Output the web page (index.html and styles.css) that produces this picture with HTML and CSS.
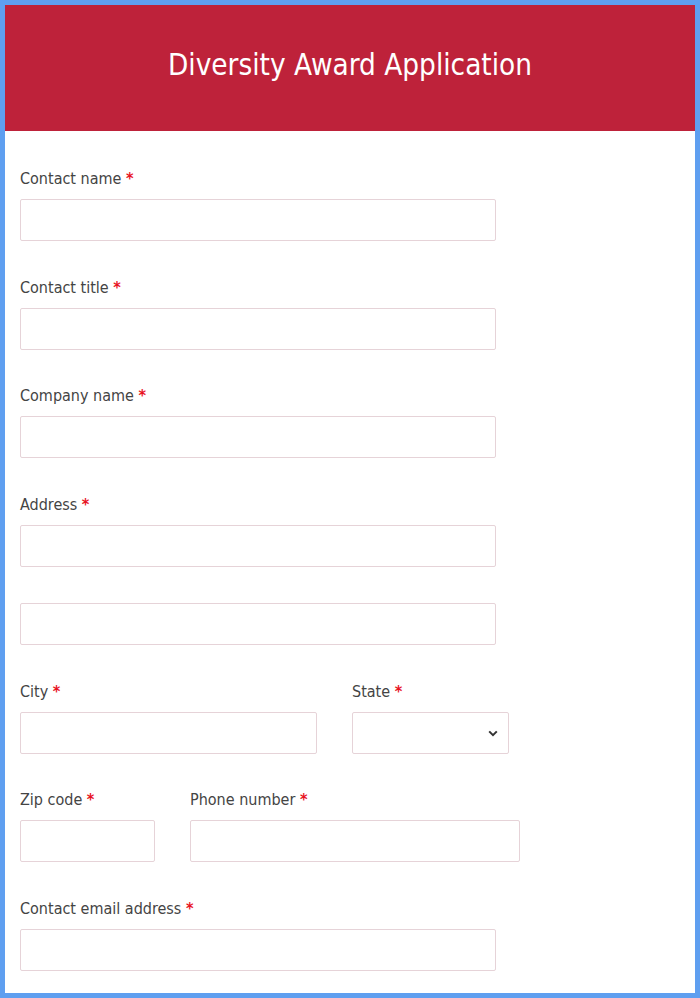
FILE: index.html
```html
<!DOCTYPE html>
<html lang="en">
<head>
<meta charset="utf-8">
<title>Diversity Award Application</title>
<link rel="stylesheet" href="styles.css">
</head>
<body>
<div class="frame">
  <header class="banner">
    <h1 class="title">Diversity Award Application</h1>
  </header>
  <form class="form">
    <div class="field">
      <label class="label">Contact name <span class="req">*</span></label>
      <input class="input w-full" type="text">
    </div>
    <div class="field">
      <label class="label">Contact title <span class="req">*</span></label>
      <input class="input w-full" type="text">
    </div>
    <div class="field">
      <label class="label">Company name <span class="req">*</span></label>
      <input class="input w-full" type="text">
    </div>
    <div class="field">
      <label class="label">Address <span class="req">*</span></label>
      <input class="input w-full" type="text">
    </div>
    <div class="field">
      <input class="input w-full" type="text">
    </div>
    <div class="row row-city">
      <div class="field">
        <label class="label">City <span class="req">*</span></label>
        <input class="input w-city" type="text">
      </div>
      <div class="field">
        <label class="label">State <span class="req">*</span></label>
        <div class="select-wrap">
          <select class="input select w-state"><option></option></select>
          <svg class="chev" width="10" height="7" viewBox="0 0 10 7"><path d="M1.2 1.4 L5 5.2 L8.8 1.4" fill="none" stroke="#333" stroke-width="2"/></svg>
        </div>
      </div>
    </div>
    <div class="row row-zip">
      <div class="field">
        <label class="label">Zip code <span class="req">*</span></label>
        <input class="input w-zip" type="text">
      </div>
      <div class="field">
        <label class="label">Phone number <span class="req">*</span></label>
        <input class="input w-phone" type="text">
      </div>
    </div>
    <div class="field">
      <label class="label">Contact email address <span class="req">*</span></label>
      <input class="input w-full" type="text">
    </div>
  </form>
</div>
</body>
</html>
```
FILE: styles.css
```css
html, body {
  margin: 0;
  padding: 0;
  background: #5f9ff0;
}
.frame {
  box-sizing: border-box;
  width: 700px;
  height: 998px;
  border: 5px solid #5f9ff0;
  background: #ffffff;
  overflow: hidden;
  font-family: "DejaVu Sans Condensed", "DejaVu Sans", sans-serif;
  font-stretch: condensed;
}
.banner {
  height: 126px;
  background: #be223a;
  display: flex;
  align-items: center;
  justify-content: center;
}
.title {
  margin: 0;
  color: #ffffff;
  font-weight: normal;
  font-size: 29.4px;
  padding-bottom: 6px;
}
.form {
  padding: 38px 15px 0 15px;
  display: flex;
  flex-direction: column;
  gap: 36.5px;
}
.field {
  display: flex;
  flex-direction: column;
  gap: 10px;
}
.label {
  font-size: 16px;
  line-height: 20px;
  height: 20px;
  color: #444444;
}
.req {
  color: #e8131f;
  font-weight: bold;
}
.input {
  box-sizing: border-box;
  height: 42px;
  border: 1px solid #e6d3d8;
  border-radius: 2px;
  background: #ffffff;
  margin: 0;
  padding: 0 8px;
  font: inherit;
  outline: none;
}
.w-full { width: 476px; }
.w-city { width: 297px; }
.w-state { width: 157px; }
.w-zip { width: 135px; }
.w-phone { width: 330px; }
.row {
  display: flex;
  gap: 35px;
}
.select-wrap {
  position: relative;
  width: 157px;
}
.select {
  appearance: none;
  -webkit-appearance: none;
}
.chev {
  position: absolute;
  right: 11px;
  top: 18px;
  pointer-events: none;
}
```
